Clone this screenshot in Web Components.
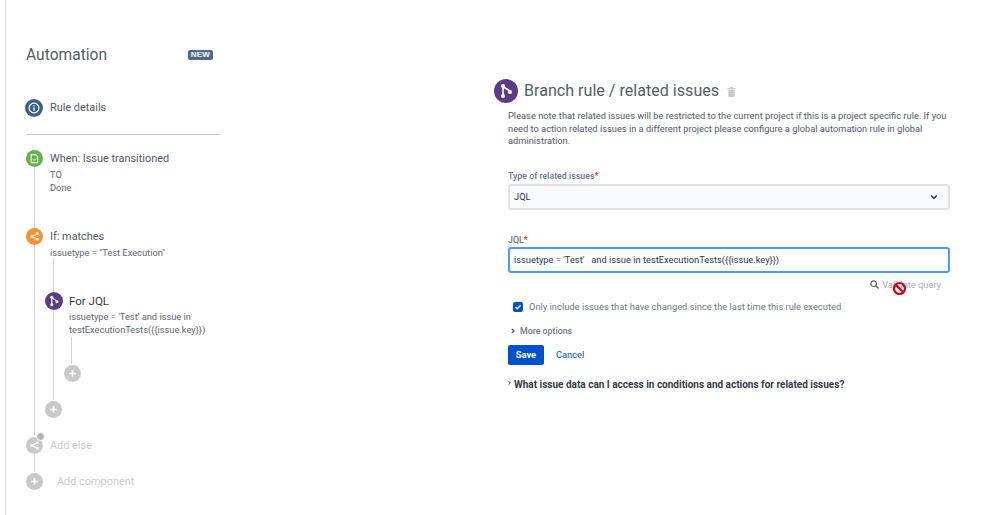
<!DOCTYPE html>
<html>
<head>
<meta charset="utf-8">
<title>Automation</title>
<style>
html, body { margin: 0; background: #fff; }
body { font-family: Roboto, "Liberation Sans", sans-serif; }
</style>
</head>
<body>
<automation-shell>
  <rule-sidebar slot="side"></rule-sidebar>
  <branch-form slot="main"></branch-form>
</automation-shell>

<script>
const ICONS = {
  info: '<circle cx="12" cy="12" r="6.500" fill="none" stroke="#fff" stroke-width="1.600"/><rect x="11.200" y="11" width="1.600" height="4.500" fill="#fff"/><rect x="11.200" y="8.400" width="1.600" height="1.600" fill="#fff"/>',
  doc: '<path d="M8 6.500h5.500L16.500 9.500V17a.8.8 0 0 1-.8.8H8a.8.8 0 0 1-.8-.8V7.300A.8.8 0 0 1 8 6.500z" fill="none" stroke="#fff" stroke-width="1.500"/><path d="M9.500 13l2 1.800 3-3" fill="none" stroke="#fff" stroke-width="1.400"/>',
  share: '<circle cx="16" cy="8" r="2" fill="#fff"/><circle cx="16" cy="16" r="2" fill="#fff"/><circle cx="8" cy="12" r="2.200" fill="#fff"/><path d="M16 8l-8 4 8 4" fill="none" stroke="#fff" stroke-width="1.500"/>',
  branch: '<circle cx="9" cy="7" r="2" fill="#fff"/><circle cx="9" cy="17" r="2" fill="#fff"/><circle cx="16" cy="13" r="2" fill="#fff"/><path d="M9 7v10M9 7c1 3 6 2.500 7 6" fill="none" stroke="#fff" stroke-width="1.600"/>',
  plus: '<path d="M12 7.500v9M7.500 12h9" stroke="#fff" stroke-width="2.200" fill="none"/>'
};

// round coloured disc with a white glyph
customElements.define('step-icon', class extends HTMLElement {
  constructor() {
    super();
    const size = this.getAttribute('size') || 17;
    const color = this.getAttribute('color') || '#c9c9c9';
    this.attachShadow({mode: 'open'}).innerHTML = `
      <style>
      :host { display: block; flex: none; width: ${size}px; height: ${size}px; }
      svg { display: block; width: 100%; height: 100%; }
      </style>
      <svg viewBox="0 0 24 24"><circle cx="12" cy="12" r="12" fill="${color}"/>${ICONS[this.getAttribute('name')]}</svg>`;
  }
});

// icon column + title + details
customElements.define('rule-step', class extends HTMLElement {
  constructor() {
    super();
    this.attachShadow({mode: 'open'}).innerHTML = `
      <style>
      :host { display: flex; align-items: flex-start; position: relative; }
      .icon { width: var(--icon-col, 24px); flex: none; }
      .title { font-size: var(--title-size, 10.900px); line-height: 18px; color: var(--title-color, #505a66); }
      .details { font-size: 9.300px; line-height: 13px; color: #5f6672; }
      </style>
      <div class="icon"><slot name="icon"></slot></div>
      <div>
        <div class="title"><slot name="title"></slot></div>
        <div class="details"><slot></slot></div>
      </div>`;
  }
});

customElements.define('rule-sidebar', class extends HTMLElement {
  constructor() {
    super();
    this.attachShadow({mode: 'open'}).innerHTML = `
      <style>
      :host { display: block; position: relative; width: 240px; height: 515px; box-sizing: border-box; padding-left: 20px; }
      .head { display: flex; align-items: center; justify-content: space-between; width: 187px; padding-top: 45px; height: 20px; }
      h1 { margin: 0; font-size: 15.600px; font-weight: 400; color: #555c66; line-height: 20px; }
      .lozenge { background: #4a6a8f; color: #fff; font: 700 8px/10px "Liberation Sans", sans-serif; padding: 0 3px; border-radius: 2px; letter-spacing: .2px; }
      hr { border: 0; border-top: 1px solid #c8cacd; margin: 17px 0 0; width: 194px; }
      .line { position: absolute; width: 1px; background: #d3d5d9; }
      .s1 { margin-top: 34px; margin-left: -1px; --icon-col: 25px; }
      .s2 { margin-top: 15px; }
      .s3 { margin-top: 34px; }
      .s4 { margin-top: 33px; margin-left: 19px; --title-color: #333a44; --title-size: 11.500px; }
      .plus1 { margin: 29px 0 0 38px; }
      .plus2 { margin: 19px 0 0 19px; }
      .s5 { margin-top: 19px; --title-color: #c9c9c9; }
      .s6 { margin-top: 18px; --icon-col: 31px; --title-color: #c9c9c9; }
      .badge { position: absolute; left: 10px; top: -5px; width: 7px; height: 7px; border-radius: 50%; background: #b5b5b5; border: 1px solid #fff; }
      </style>
      <div class="head"><h1>Automation</h1><span class="lozenge">NEW</span></div>

      <rule-step class="s1"><step-icon slot="icon" name="info" color="#3e5f86" size="18"></step-icon><span slot="title">Rule details</span></rule-step>
      <hr>

      <i class="line" style="left:28px;top:167px;height:61px"></i>
      <i class="line" style="left:28px;top:245px;height:190px"></i>
      <i class="line" style="left:47px;top:258px;height:35px"></i>
      <i class="line" style="left:47px;top:310px;height:90px"></i>
      <i class="line" style="left:65px;top:337px;height:27px"></i>
      <i class="line" style="left:28px;top:454px;height:18px"></i>

      <rule-step class="s2"><step-icon slot="icon" name="doc" color="#64b14d"></step-icon><span slot="title">When: Issue transitioned</span>TO<br>Done</rule-step>
      <rule-step class="s3"><step-icon slot="icon" name="share" color="#f79232"></step-icon><span slot="title">If: matches</span>issuetype = "Test Execution"</rule-step>
      <rule-step class="s4"><step-icon slot="icon" name="branch" color="#5b3d87" size="18"></step-icon><span slot="title">For JQL</span>issuetype = 'Test' and issue in<br>testExecutionTests({{issue.key}})</rule-step>
      <step-icon class="plus1" name="plus"></step-icon>
      <step-icon class="plus2" name="plus"></step-icon>
      <rule-step class="s5"><step-icon slot="icon" name="share"></step-icon><span slot="title">Add else</span><span class="badge"></span></rule-step>
      <rule-step class="s6"><step-icon slot="icon" name="plus"></step-icon><span slot="title">Add component</span></rule-step>`;
  }
});

customElements.define('field-label', class extends HTMLElement {
  constructor() {
    super();
    this.attachShadow({mode: 'open'}).innerHTML = `
      <style>
      :host { display: block; font: 500 8.800px/12px Roboto, sans-serif; color: #6b778c; }
      b { color: #de350b; font-weight: 500; }
      </style><slot></slot><b>*</b>`;
  }
});

customElements.define('text-box', class extends HTMLElement {
  constructor() {
    super();
    this.attachShadow({mode: 'open'}).innerHTML = `
      <style>
      :host { display: flex; align-items: center; justify-content: space-between; box-sizing: border-box; width: 442px; height: 26px; padding: 0 10px 0 4px; border: 2px solid #dfe1e6; border-radius: 3px; background: #fafbfc; font-size: 9.300px; color: #253858; white-space: pre; }
      :host([focused]) { border-color: #4c9aff; background: #fff; }
      </style><slot></slot><slot name="end"></slot>`;
  }
});

customElements.define('branch-form', class extends HTMLElement {
  constructor() {
    super();
    this.attachShadow({mode: 'open'}).innerHTML = `
      <style>
      :host { display: block; position: relative; padding: 79px 0 0 262px; font-size: 9.300px; color: #505a66; }
      .head { display: flex; align-items: center; margin-left: -14px; height: 24px; }
      h2 { margin: 0 0 0 6px; font-size: 16.100px; font-weight: 400; color: #555c66; line-height: 24px; }
      .trash { margin-left: 8px; }
      p { margin: 7px 0 0; width: 442px; line-height: 12.600px; }
      field-label.a { margin-top: 22px; }
      text-box { margin-top: 2px; }
      field-label.b { margin-top: 24px; }
      text-box[focused] { margin-top: 1px; }
      .validate { display: flex; justify-content: flex-end; align-items: center; gap: 3px; width: 433px; margin-top: 6px; color: #a5adba; line-height: 12px; }
      .check { display: flex; align-items: center; margin-top: 10px; padding-left: 5px; color: #6b778c; line-height: 12px; gap: 6px; font-size: 9.350px; }
      .box { width: 10px; height: 10px; border-radius: 2px; background: #0052cc; }
      .more { display: flex; align-items: center; gap: 5px; margin-top: 12px; padding-left: 3px; color: #6b778c; font-weight: 500; font-size: 8.800px; line-height: 12px; }
      .actions { display: flex; align-items: center; gap: 12px; margin-top: 8px; }
      .save { width: 36px; height: 20px; background: #0052cc; border-radius: 2px; color: #fff; font-weight: 700; text-align: center; line-height: 20px; }
      .cancel { color: #0052cc; }
      .faq { display: flex; align-items: flex-start; gap: 3px; margin-top: 14px; font-size: 10px; font-weight: 700; color: #333a44; line-height: 12px; }
      .no { position: absolute; left: 646px; top: 281px; }
      svg { display: block; }
      </style>
      <div class="head">
        <step-icon name="branch" color="#5b3d87" size="24"></step-icon>
        <h2>Branch rule / related issues</h2>
        <svg class="trash" width="9" height="11" viewBox="0 0 9 11"><path d="M0.500 2h8v1h-8zM3 1h3v1H3zM1.300 3.500h6.400V10a1 1 0 0 1-1 1H2.300a1 1 0 0 1-1-1z" fill="#c9c9c9"/></svg>
      </div>
      <p>Please note that related issues will be restricted to the current project if this is a project specific rule. If you need to action related issues in a different project please configure a global automation rule in global administration.</p>
      <field-label class="a">Type of related issues</field-label>
      <text-box>JQL<svg slot="end" width="8" height="6" viewBox="0 0 8 6"><path d="M1.200 1.500L4 4.200l2.800-2.700" fill="none" stroke="#253858" stroke-width="1.500"/></svg></text-box>
      <field-label class="b">JQL</field-label>
      <text-box focused>issuetype = 'Test'   and issue in testExecutionTests({{issue.key}})</text-box>
      <div class="validate">
        <svg width="9" height="9" viewBox="0 0 9 9"><circle cx="3.700" cy="3.700" r="2.800" fill="none" stroke="#505f79" stroke-width="1.200"/><path d="M5.800 5.800l2.700 2.700" stroke="#505f79" stroke-width="1.300"/></svg>
        <span>Validate query</span>
      </div>
      <div class="check">
        <div class="box"><svg width="10" height="10" viewBox="0 0 10 10"><path d="M2.500 5l1.800 1.800 3.300-3.500" fill="none" stroke="#fff" stroke-width="1.400"/></svg></div>
        <span>Only include issues that have changed since the last time this rule executed</span>
      </div>
      <div class="more"><svg width="4" height="6" viewBox="0 0 4 6"><path d="M.8.800L3 3 .8 5.200" fill="none" stroke="#42526e" stroke-width="1.200"/></svg><span>More options</span></div>
      <div class="actions"><div class="save">Save</div><div class="cancel">Cancel</div></div>
      <div class="faq"><svg width="3" height="6" viewBox="0 0 4 6" style="margin-top:1px"><path d="M.8.800L3 3 .8 5.200" fill="none" stroke="#253858" stroke-width="1.200"/></svg><span>What issue data can I access in conditions and actions for related issues?</span></div>
      <svg class="no" width="15" height="15" viewBox="0 0 15 15"><circle cx="7.500" cy="7.500" r="5.500" fill="none" stroke="#d0021b" stroke-width="2.200"/><path d="M3.700 3.700l7.600 7.600" stroke="#d0021b" stroke-width="2.200"/></svg>`;
  }
});

customElements.define('automation-shell', class extends HTMLElement {
  constructor() {
    super();
    this.attachShadow({mode: 'open'}).innerHTML = `
      <style>
      :host { display: flex; height: 515px; margin-left: 5px; border-left: 1px solid #dfe1e6; overflow: hidden; }
      </style>
      <slot name="side"></slot><slot name="main"></slot>`;
  }
});
</script>
</body>
</html>
